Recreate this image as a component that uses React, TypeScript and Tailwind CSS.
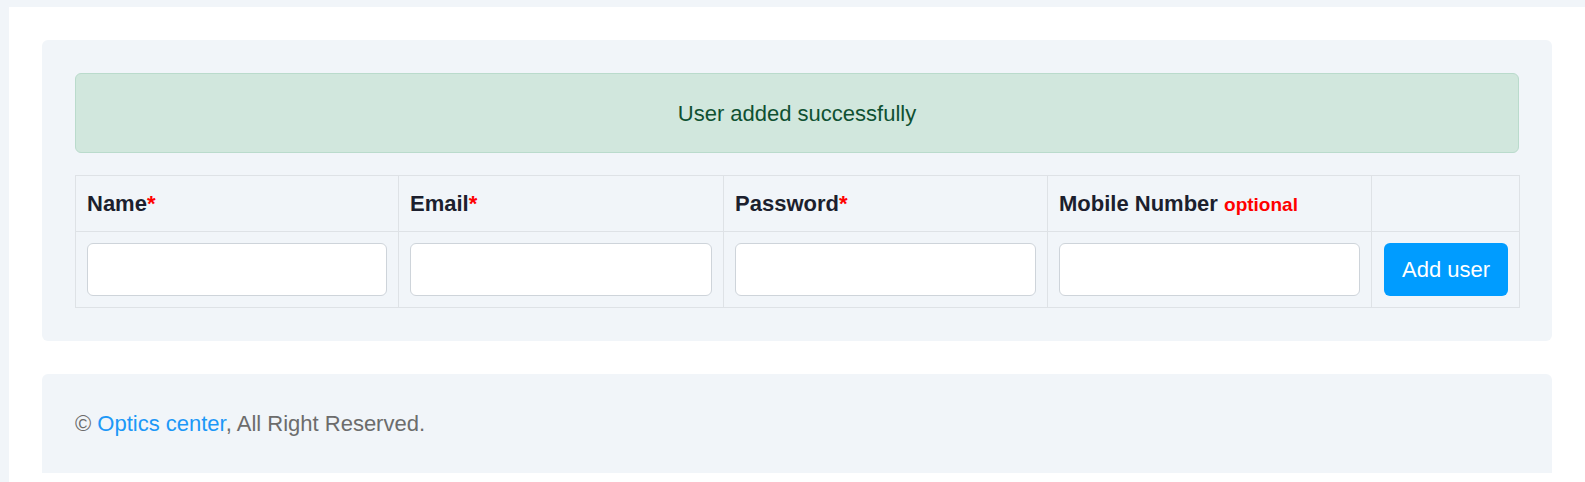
import React from "react";

const font = { fontFamily: '"Liberation Sans", Arial, sans-serif' };

function HeaderCell({ children }: { children?: React.ReactNode }) {
  return (
    <th className="h-[56px] border border-[#dee2e6] pl-[11px] pr-3 text-left align-middle text-[22px] font-bold text-[#1c1f2e]">
      {children}
    </th>
  );
}

function InputCell() {
  return (
    <td className="border border-[#dee2e6] px-[11px] py-[11px] align-middle">
      <input
        type="text"
        className="block h-[53px] w-full rounded-md border border-[#ced4da] bg-white px-3 text-[22px] outline-none"
      />
    </td>
  );
}

export default function App() {
  return (
    <div className="min-h-[482px] bg-[#f1f5f9] pl-[9px] pt-[7px]" style={font}>
      <div className="min-h-[475px] bg-white px-[33px] pt-[33px] pb-[9px]">
        <div className="rounded-md bg-[#f1f5f9] p-[33px] pb-[33px]">
          <div className="flex h-[80px] items-center justify-center rounded-md border border-[#badbcc] bg-[#d1e7dd] text-[22px] text-[#0f5132]">
            User added successfully
          </div>
          <table className="mt-[22px] w-full table-fixed border-collapse">
            <colgroup>
              <col className="w-[323px]" />
              <col className="w-[325px]" />
              <col className="w-[324px]" />
              <col className="w-[324px]" />
              <col className="w-[148px]" />
            </colgroup>
            <thead>
              <tr>
                <HeaderCell>
                  Name<span className="text-[#ff0000]">*</span>
                </HeaderCell>
                <HeaderCell>
                  Email<span className="text-[#ff0000]">*</span>
                </HeaderCell>
                <HeaderCell>
                  Password<span className="text-[#ff0000]">*</span>
                </HeaderCell>
                <HeaderCell>
                  Mobile Number{" "}
                  <span className="text-[19px] text-[#ff0000]">optional</span>
                </HeaderCell>
                <HeaderCell />
              </tr>
            </thead>
            <tbody>
              <tr>
                <InputCell />
                <InputCell />
                <InputCell />
                <InputCell />
                <td className="border border-[#dee2e6] pl-3 pr-[11px] py-[11px] align-middle">
                  <button className="flex h-[53px] w-[124px] items-center justify-center rounded-md bg-[#009cff] text-[22px] text-white">
                    Add user
                  </button>
                </td>
              </tr>
            </tbody>
          </table>
        </div>
        <div className="mt-[33px] flex h-[99px] items-center rounded-t-md bg-[#f1f5f9] px-[33px] text-[22px] text-[#6c6c6c]">
          <span>
            © <span className="text-[#1c98f7]">Optics center</span>, All Right Reserved.
          </span>
        </div>
      </div>
    </div>
  );
}
